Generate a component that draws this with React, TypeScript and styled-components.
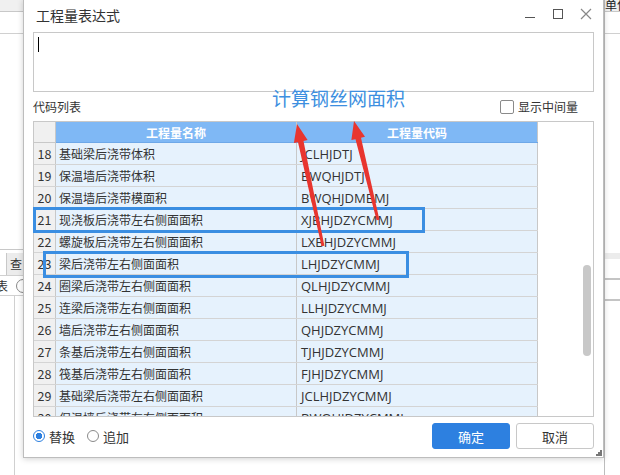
import React from 'react';
import styled, { createGlobalStyle } from 'styled-components';

type Row = { no: number; name: string; code: string };

const ROWS: Row[] = [
    { no: 18, name: '基础梁后浇带体积', code: 'JCLHJDTJ' },
    { no: 19, name: '保温墙后浇带体积', code: 'BWQHJDTJ' },
    { no: 20, name: '保温墙后浇带模面积', code: 'BWQHJDMBMJ' },
    { no: 21, name: '现浇板后浇带左右侧面面积', code: 'XJBHJDZYCMMJ' },
    { no: 22, name: '螺旋板后浇带左右侧面面积', code: 'LXBHJDZYCMMJ' },
    { no: 23, name: '梁后浇带左右侧面面积', code: 'LHJDZYCMMJ' },
    { no: 24, name: '圈梁后浇带左右侧面面积', code: 'QLHJDZYCMMJ' },
    { no: 25, name: '连梁后浇带左右侧面面积', code: 'LLHJDZYCMMJ' },
    { no: 26, name: '墙后浇带左右侧面面积', code: 'QHJDZYCMMJ' },
    { no: 27, name: '条基后浇带左右侧面面积', code: 'TJHJDZYCMMJ' },
    { no: 28, name: '筏基后浇带左右侧面面积', code: 'FJHJDZYCMMJ' },
    { no: 29, name: '基础梁后浇带左右侧面面积', code: 'JCLHJDZYCMMJ' },
    { no: 30, name: '保温墙后浇带左右侧面面积', code: 'BWQHJDZYCMMJ' },
];

// tail -> tip, tapered shaft with a filled head
const arrowPoints = (tx: number, ty: number, px: number, py: number) => {
    const dx = px - tx;
    const dy = py - ty;
    const len = Math.hypot(dx, dy);
    const ux = dx / len;
    const uy = dy / len;
    const nx = -uy;
    const ny = ux;
    const head = 18;
    const hw = 7;
    const bx = px - ux * head;
    const by = py - uy * head;
    const pts = [
        [tx + nx * 1.4, ty + ny * 1.4],
        [bx + nx * 2.8, by + ny * 2.8],
        [bx + nx * hw, by + ny * hw],
        [px, py],
        [bx - nx * hw, by - ny * hw],
        [bx - nx * 2.8, by - ny * 2.8],
        [tx - nx * 1.4, ty - ny * 1.4],
    ];
    return pts.map(p => `${p[0].toFixed(1)},${p[1].toFixed(1)}`).join(' ');
};

const App: React.FC = () => {
    return (
        <Desktop>
            <GlobalStyle />
            <SideApp>
                <AppMenu />
                <AppBar />
                <AppGap />
                <AppTabs>
                    <AppTab>查</AppTab>
                </AppTabs>
                <AppFilter>
                    <span>表</span>
                    <AppRadio />
                </AppFilter>
                <AppGrid />
            </SideApp>

            <Dialog>
                <TitleBar>
                    <Title>工程量表达式</Title>
                    <WinButtons>
                        <WinBtn>
                            <svg width="12" height="12" viewBox="0 0 12 12">
                                <path d="M1 9.5h10" stroke="#555" strokeWidth="1" />
                            </svg>
                        </WinBtn>
                        <WinBtn>
                            <svg width="12" height="12" viewBox="0 0 12 12">
                                <rect x="1.5" y="1.5" width="9" height="9" fill="none" stroke="#555" strokeWidth="1" />
                            </svg>
                        </WinBtn>
                        <WinBtn>
                            <svg width="12" height="12" viewBox="0 0 12 12">
                                <path d="M1 1l10 10M11 1L1 11" stroke="#888" strokeWidth="1.2" />
                            </svg>
                        </WinBtn>
                    </WinButtons>
                </TitleBar>

                <Body>
                    <Editor>
                        <Caret />
                    </Editor>

                    <ListHead>
                        <Label>代码列表</Label>
                        <Check>
                            <CheckBox />
                            显示中间量
                        </Check>
                    </ListHead>

                    <TableBox>
                        <Grid>
                            <thead>
                                <tr>
                                    <HeadCorner />
                                    <HeadCell>工程量名称</HeadCell>
                                    <HeadCell>工程量代码</HeadCell>
                                </tr>
                            </thead>
                            <tbody>
                                {ROWS.map(r => (
                                    <tr key={r.no}>
                                        <NumCell>{r.no}</NumCell>
                                        <NameCell>{r.name}</NameCell>
                                        <CodeCell>{r.code}</CodeCell>
                                    </tr>
                                ))}
                            </tbody>
                        </Grid>
                        <ScrollThumb />
                    </TableBox>

                    <Footer>
                        <Radios>
                            <Radio>
                                <RadioDot checked />
                                替换
                            </Radio>
                            <Radio>
                                <RadioDot />
                                追加
                            </Radio>
                        </Radios>
                        <Buttons>
                            <Button primary>确定</Button>
                            <Button>取消</Button>
                        </Buttons>
                    </Footer>
                </Body>
                <Grip>
                    <svg width="6" height="6" viewBox="0 0 6 6">
                        <rect x="4" y="0" width="2" height="2" fill="#777" />
                        <rect x="2" y="2" width="2" height="2" fill="#777" />
                        <rect x="4" y="2" width="2" height="2" fill="#777" />
                        <rect x="0" y="4" width="2" height="2" fill="#777" />
                        <rect x="2" y="4" width="2" height="2" fill="#777" />
                        <rect x="4" y="4" width="2" height="2" fill="#777" />
                    </svg>
                </Grip>
            </Dialog>

            <SideApp right>
                <AppMenu>单位</AppMenu>
                <AppBar />
                <AppGap />
                <AppBand />
                <AppRowLine />
                <AppRowLine />
            </SideApp>

            <Note>计算钢丝网面积</Note>
            <Mark style={{ left: 33, top: 207, width: 392, height: 26 }} />
            <Mark style={{ left: 43, top: 251, width: 366, height: 27 }} />
            <Arrows width="620" height="475" viewBox="0 0 620 475">
                <polygon points={arrowPoints(323, 246, 297, 124)} fill="#e8352f" />
                <polygon points={arrowPoints(378, 220, 354, 121)} fill="#e8352f" />
            </Arrows>
        </Desktop>
    );
};

const GlobalStyle = createGlobalStyle`
    html, body {
        margin: 0;
        padding: 0;
        background: #fff;
    }
    body {
        font-family: "Noto Sans CJK SC", "Noto Sans", sans-serif;
        color: #333;
        overflow: hidden;
    }
`;

const Desktop = styled.div`
    position: relative;
    width: 620px;
    height: 475px;
    display: grid;
    grid-template-columns: 23px 581px 16px;
    align-items: start;
    overflow: hidden;
    background: #fff;
`;

const SideApp = styled.div<{ right?: boolean }>`
    height: 475px;
    display: flex;
    flex-direction: column;
    background: #fff;
    overflow: hidden;
    ${p => p.right && 'border-left: 1px solid #bdbdbd;'}
`;

const AppMenu = styled.div`
    height: 11px;
    background: #f0f0f0;
    border-bottom: 1px solid #c8c8c8;
    font-size: 12px;
    line-height: 9px;
    color: #222;
    white-space: nowrap;
    overflow: hidden;
`;

const AppBar = styled.div`
    height: 21px;
    border-bottom: 1px solid #d0d0d0;
`;

const AppGap = styled.div`
    height: 215px;
`;

const AppTabs = styled.div`
    height: 25px;
    border-top: 1px solid #c8c8c8;
    display: flex;
    justify-content: flex-end;
    align-items: flex-end;
`;

const AppTab = styled.div`
    width: 13px;
    height: 22px;
    background: #ececec;
    border-left: 1px solid #c8c8c8;
    font-size: 12px;
    line-height: 22px;
    padding-left: 3px;
    overflow: hidden;
`;

const AppFilter = styled.div`
    height: 19px;
    display: flex;
    align-items: center;
    gap: 8px;
    font-size: 12px;
    border-top: 1px solid #d0d0d0;
    border-bottom: 1px solid #d0d0d0;
    white-space: nowrap;
    margin-left: -4px;
`;

const AppRadio = styled.span`
    width: 12px;
    height: 12px;
    border-radius: 50%;
    border: 1px solid #888;
    flex: none;
`;

const AppGrid = styled.div`
    flex: 1;
    margin-left: 14px;
    border-left: 1px solid #d0d0d0;
`;

const AppBand = styled.div`
    height: 6px;
    background: #ececec;
    margin-top: 4px;
`;

const AppRowLine = styled.div`
    height: 19px;
    border-bottom: 2px solid #c4c4c4;
`;

const Dialog = styled.div`
    position: relative;
    height: 459px;
    margin-top: -1px;
    box-sizing: border-box;
    border: 1px solid #bdbdbd;
    background: #fff;
    box-shadow: 0 1px 6px rgba(0, 0, 0, 0.18);
    display: flex;
    flex-direction: column;
`;

const TitleBar = styled.div`
    height: 32px;
    display: flex;
    align-items: center;
    justify-content: space-between;
    padding-left: 12px;
    flex: none;
`;

const Title = styled.div`
    font-size: 14px;
    color: #333;
    margin-top: -3px;
`;

const WinButtons = styled.div`
    display: flex;
    gap: 16px;
    padding-right: 11px;
    margin-top: -5px;
`;

const WinBtn = styled.span`
    width: 12px;
    height: 12px;
    display: flex;
`;

const Body = styled.div`
    flex: 1;
    display: flex;
    flex-direction: column;
    padding: 0 9px;
`;

const Editor = styled.div`
    height: 60px;
    box-sizing: border-box;
    border: 1px solid #c8c8c8;
    padding: 4px 4px;
`;

const Caret = styled.span`
    display: block;
    width: 1px;
    height: 15px;
    background: #000;
`;

const ListHead = styled.div`
    height: 29px;
    display: flex;
    align-items: center;
    justify-content: space-between;
    font-size: 12px;
`;

const Label = styled.span`
    color: #333;
`;

const Check = styled.label`
    display: flex;
    align-items: center;
    gap: 4px;
    padding-right: 16px;
    color: #333;
`;

const CheckBox = styled.span`
    width: 12px;
    height: 12px;
    border: 1px solid #8a8a8a;
    border-radius: 2px;
    background: #fff;
`;

const TableBox = styled.div`
    position: relative;
    height: 296px;
    box-sizing: border-box;
    border: 1px solid #c8c8c8;
    overflow: hidden;
    background: #fff;
`;

const Grid = styled.table`
    border-collapse: collapse;
    table-layout: fixed;
    width: 504px;
    font-size: 12px;
`;

const HeadCorner = styled.th`
    width: 21px;
    height: 20px;
    padding: 0;
    background: #f0f0f0;
    border-right: 1px solid #c8c8c8;
    border-bottom: 1px solid #c8c8c8;
`;

const HeadCell = styled.th`
    height: 20px;
    padding: 0;
    background: #7fb8f5;
    color: #fff;
    font-weight: bold;
    text-align: center;
    border-bottom: 1px solid #6ea8e8;
    border-right: 1px solid #c8c8c8;

    &:nth-child(2) {
        width: 240px;
    }
`;

const NumCell = styled.td`
    height: 21px;
    padding: 0;
    text-align: center;
    background: #f0f0f0;
    border-right: 1px solid #c8c8c8;
    border-bottom: 1px solid #d4d4d4;
    color: #333;
    font-size: 12.5px;
`;

const NameCell = styled.td`
    height: 21px;
    padding: 0 0 0 3px;
    background: #e6f2fd;
    border-right: 1px solid #c8c8c8;
    border-bottom: 1px solid #d4d4d4;
    white-space: nowrap;
    overflow: hidden;
    color: #333;
`;

const CodeCell = styled(NameCell)`
    padding-left: 4px;
    font-family: "Open Sans", "Noto Sans", sans-serif;
    font-size: 13px;
`;

const ScrollThumb = styled.div`
    position: absolute;
    left: 549px;
    top: 143px;
    width: 8px;
    height: 91px;
    border-radius: 4px;
    background: #c8c8c8;
`;

const Footer = styled.div`
    flex: 1;
    display: flex;
    align-items: flex-start;
    justify-content: space-between;
    padding-top: 6px;
`;

const Radios = styled.div`
    display: flex;
    gap: 12px;
    height: 26px;
    align-items: center;
    font-size: 13px;
    color: #333;
`;

const Radio = styled.label`
    display: flex;
    align-items: center;
    gap: 4px;
`;

const RadioDot = styled.span<{ checked?: boolean }>`
    width: 12px;
    height: 12px;
    border-radius: 50%;
    box-sizing: border-box;
    border: 1px solid ${p => (p.checked ? '#2d80e0' : '#8a8a8a')};
    background: ${p => (p.checked ? 'radial-gradient(circle, #2d80e0 0 3px, #fff 3.5px)' : '#fff')};
`;

const Buttons = styled.div`
    display: flex;
    gap: 6px;
`;

const Button = styled.button<{ primary?: boolean }>`
    width: 78px;
    height: 26px;
    box-sizing: border-box;
    border-radius: 3px;
    font-family: "Noto Sans CJK SC", sans-serif;
    font-size: 13px;
    padding: 0;
    border: 1px solid ${p => (p.primary ? '#2d80e0' : '#c8c8c8')};
    background: ${p => (p.primary ? '#2d80e0' : '#fff')};
    color: ${p => (p.primary ? '#fff' : '#333')};
`;

const Grip = styled.div`
    position: absolute;
    right: 1px;
    bottom: 1px;
    display: flex;
`;

const Note = styled.div`
    position: absolute;
    left: 272px;
    top: 84px;
    font-size: 19px;
    color: #3d8fe0;
    white-space: nowrap;
`;

const Mark = styled.div`
    position: absolute;
    box-sizing: border-box;
    border: 3px solid #3a8ee2;
    pointer-events: none;
`;

const Arrows = styled.svg`
    position: absolute;
    left: 0;
    top: 0;
    pointer-events: none;
`;

export default App;
